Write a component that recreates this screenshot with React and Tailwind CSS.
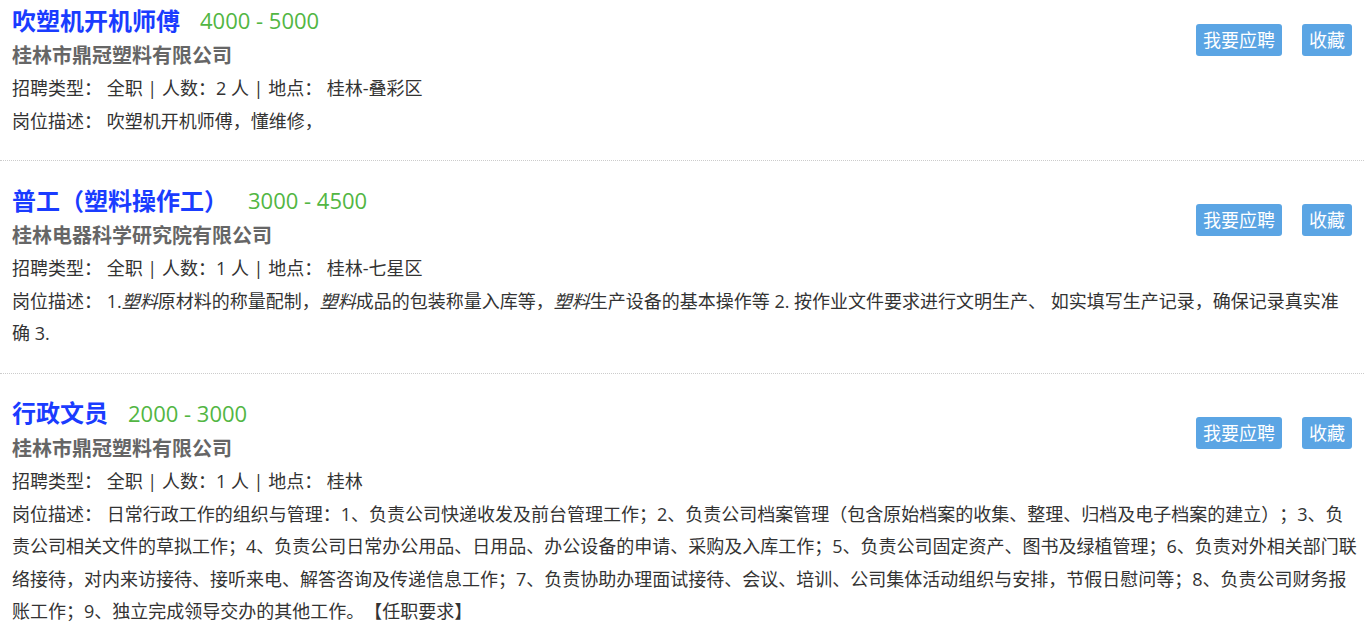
import React from "react";

const jobs = [
  {
    title: "吹塑机开机师傅",
    salary: "4000 - 5000",
    company: "桂林市鼎冠塑料有限公司",
    count: "2",
    place: "桂林-叠彩区",
    descClass: "",
    desc: <>吹塑机开机师傅，懂维修，</>,
  },
  {
    title: "普工（塑料操作工）",
    salary: "3000 - 4500",
    company: "桂林电器科学研究院有限公司",
    count: "1",
    place: "桂林-七星区",
    descClass: "pr-2",
    desc: (
      <>
        1.<em>塑料</em>原材料的称量配制，<em>塑料</em>成品的包装称量入库等，<em>塑料</em>生产设备的基本操作等 2. 按作业文件要求进行文明生产、 如实填写生产记录，确保记录真实准确 3.
      </>
    ),
  },
  {
    title: "行政文员",
    salary: "2000 - 3000",
    company: "桂林市鼎冠塑料有限公司",
    count: "1",
    place: "桂林",
    descClass: "",
    desc: (
      <>
        日常行政工作的组织与管理：1、负责公司快递收发及前台管理工作；2、负责公司档案管理（包含原始档案的收集、整理、归档及电子档案的建立）；3、负责公司相关文件的草拟工作；4、负责公司日常办公用品、日用品、办公设备的申请、采购及入库工作；5、负责公司固定资产、图书及绿植管理；6、负责对外相关部门联络接待，对内来访接待、接听来电、解答咨询及传递信息工作；7、负责协助办理面试接待、会议、培训、公司集体活动组织与安排，节假日慰问等；8、负责公司财务报账工作；9、独立完成领导交办的其他工作。【任职要求】
      </>
    ),
  },
];

function Job({ job, first }) {
  return (
    <div
      className={
        "border-b border-dotted border-[#cccccc] pl-3 pr-1 pb-[23px] " +
        (first ? "pt-[1px]" : "pt-5")
      }
    >
      <div className="float-right mr-2 mt-[23px] flex gap-5">
        <button className="h-8 rounded-[3px] bg-[#5ba5e4] px-[7px] text-[18px] leading-8 text-white">
          我要应聘
        </button>
        <button className="h-8 rounded-[3px] bg-[#5ba5e4] px-[7px] text-[18px] leading-8 text-white">
          收藏
        </button>
      </div>
      <div className="flex h-[39px] items-center">
        <span className="text-[24px] font-bold text-[#1a3cff]">{job.title}</span>
        <span className="ml-5 text-[22px] text-[#52b643]">{job.salary}</span>
      </div>
      <div className="text-[20px] font-bold leading-8 text-[#666666]">{job.company}</div>
      <div className="text-[18px] leading-[32.6px] text-[#333333]">
        招聘类型： 全职 | 人数：{job.count} 人 | 地点： {job.place}
      </div>
      <div className={"text-[18px] leading-[32.6px] text-[#333333] " + job.descClass}>
        岗位描述： {job.desc}
      </div>
    </div>
  );
}

export default function App() {
  return (
    <div
      className="min-h-screen bg-white [text-spacing-trim:space-all]"
      style={{ fontFamily: '"Open Sans", "Noto Sans CJK SC", sans-serif' }}
    >
      {jobs.map((j, i) => (
        <Job key={i} job={j} first={i === 0} />
      ))}
    </div>
  );
}
